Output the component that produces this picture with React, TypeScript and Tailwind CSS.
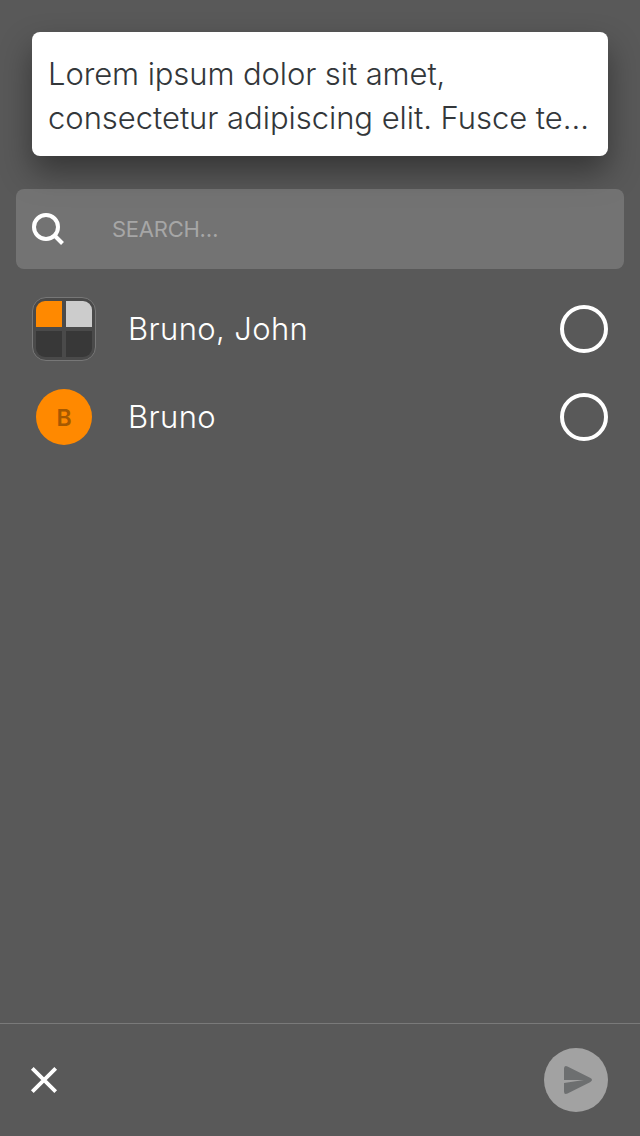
const contacts = [
  { name: "Bruno, John", group: true },
  { name: "Bruno", group: false },
];

function GroupAvatar() {
  return (
    <div className="h-16 w-16 rounded-[14px] border border-[#777777] bg-[#4a4a4a] p-[3px]">
      <div className="grid h-14 w-14 grid-cols-2 gap-1 overflow-hidden rounded-[9px]">
        <div className="bg-[#ff8900]" />
        <div className="bg-[#cccccc]" />
        <div className="bg-[#383838]" />
        <div className="bg-[#383838]" />
      </div>
    </div>
  );
}

function UserAvatar() {
  return (
    <div className="flex h-14 w-14 items-center justify-center rounded-full bg-[#ff8900] pt-0.5 text-[23px] leading-none font-semibold text-[#a65900]">
      B
    </div>
  );
}

export default function App() {
  return (
    <main className="flex h-[1136px] w-[640px] flex-col overflow-hidden bg-[#595959] font-['Inter',sans-serif]">
      <div className="mx-8 mt-8 h-[124px] shrink-0 rounded-lg bg-white px-4 pt-5 text-[31px] leading-[44px] font-light whitespace-nowrap text-[#33373a] shadow-[0_16px_32px_rgba(0,0,0,0.4)]">
        <p className="tracking-[-0.1px]">Lorem ipsum dolor sit amet,</p>
        <p className="tracking-[-0.04px]">consectetur adipiscing elit. Fusce te…</p>
      </div>

      <label className="mx-4 mt-[33px] flex h-20 shrink-0 items-center rounded-lg bg-white/16 pl-4">
        <svg className="h-8 w-8" viewBox="0 0 32 32" fill="none" stroke="white" strokeWidth="4">
          <circle cx="14" cy="14" r="12" />
          <path d="M22.5 22.5L30.5 30.5" />
        </svg>
        <span className="ml-12 text-[22px] leading-8 font-normal tracking-[-0.25px] text-[#a6a6a6]">SEARCH…</span>
      </label>

      <ul className="mt-4 flex flex-1 flex-col">
        {contacts.map((contact) => (
          <li key={contact.name} className="flex h-[88px] items-center px-8">
            <div className="flex w-16 justify-center">
              {contact.group ? <GroupAvatar /> : <UserAvatar />}
            </div>
            <span className="ml-8 flex-1 text-[31px] leading-10 font-light tracking-[0.38px] text-white">{contact.name}</span>
            <span className="h-12 w-12 rounded-full border-4 border-white" />
          </li>
        ))}
      </ul>

      <footer className="flex h-[113px] shrink-0 items-center justify-between border-t border-[#7a7a7a] px-8">
        <button aria-label="Close">
          <svg className="h-6 w-6" viewBox="0 0 24 24" overflow="visible" stroke="white" strokeWidth="3.8">
            <path d="M0.3 0.3L23.7 23.7M23.7 0.3L0.3 23.7" />
          </svg>
        </button>
        <button aria-label="Send" className="flex h-16 w-16 items-center justify-center rounded-full bg-[#a2a2a2]">
          <svg className="h-16 w-16" viewBox="0 0 64 64" fill="#6d6f70">
            <path d="M20 32V20.5Q20 17 23.5 18.4L46 29.8Q50 32 46 34.2L23.5 45.6Q20 47 20 43.5V35L40 32Z" />
          </svg>
        </button>
      </footer>
    </main>
  );
}
